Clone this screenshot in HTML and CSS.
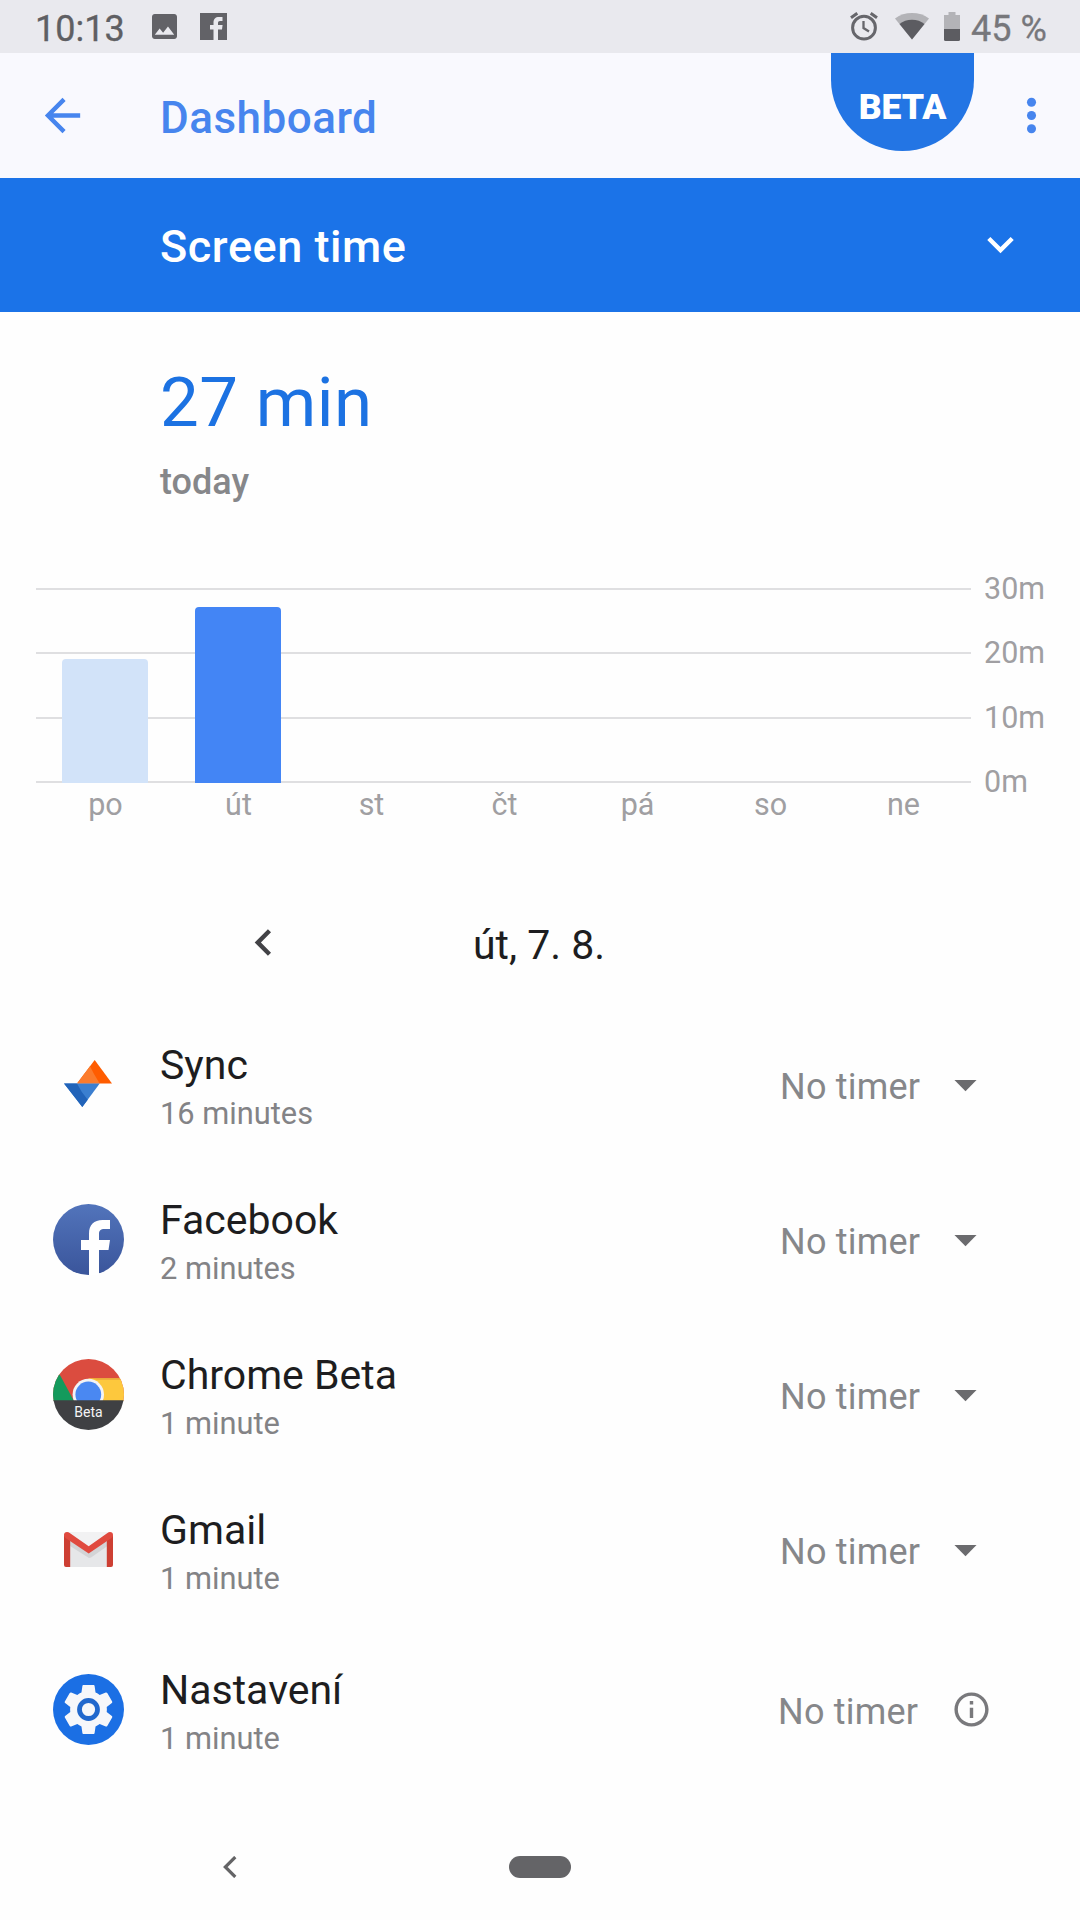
FILE: index.html
```html
<!DOCTYPE html>
<html lang="en">
<head>
<meta charset="utf-8">
<title>Dashboard</title>
<link rel="stylesheet" href="styles.css">
</head>
<body>
<div class="statusbar">
  <span class="clock">10:13</span>
  <svg class="st-photo" width="25" height="25" viewBox="3 3 18 18"><path fill="#626267" d="M21 19V5c0-1.1-.9-2-2-2H5c-1.1 0-2 .9-2 2v14c0 1.100.9 2 2 2h14c1.100 0 2-.9 2-2zM8.500 13.500l2.500 3.010L14.500 12l4.500 6H5l3.500-4.500z"/></svg>
  <svg class="st-fb" width="27" height="27" viewBox="0 0 27 27"><path fill="#626267" d="M0 0h27v27H18v-10.500h4l.6-4.500H18V10c0-1.300.6-2 2-2h2.500V4H19c-3.600 0-5.500 2-5.500 5.500V12h-3.500v4.500h3.500V27H0z"/></svg>
  <span class="spacer"></span>
  <svg class="st-alarm" width="28" height="29" viewBox="0 0 28 29"><g fill="none" stroke="#66666b"><circle cx="14" cy="15.700" r="11.400" stroke-width="3"/><path stroke-width="2.300" d="M13.500 9v7l5.500 3.400"/><path stroke-width="3" d="M1 5.800L7.300 1.200M27 5.800L20.700 1.200"/></g></svg>
  <svg class="st-wifi" width="34" height="27" viewBox="0 0 34 27"><path fill="#b3b3b7" d="M0 5.500C5 1.800 10.600 0 17 0s12 1.800 17 5.500L17 26.500z"/><path fill="#5c5c61" d="M4.500 11C8 8.300 12 6.800 17 6.800S26 8.300 29.500 11L17 26.500z"/></svg>
  <svg class="st-batt" width="16" height="29" viewBox="0 0 16 29"><path fill="#b3b3b7" d="M4.500 0h7v3H16v14H0V3h4.500z"/><path fill="#5c5c61" d="M0 17h16v10.500q0 1.500-1.500 1.500h-13Q0 29 0 27.500z"/></svg>
  <span class="percent">45 %</span>
</div>

<header class="appbar">
  <svg class="icon back" viewBox="0 0 24 24"><path fill="#4785ee" d="M20 11H7.830l5.590-5.590L12 4l-8 8 8 8 1.410-1.410L7.830 13H20v-2z"/></svg>
  <h1 class="title">Dashboard</h1>
  <div class="beta">BETA</div>
  <svg class="icon more" viewBox="0 0 24 24"><g fill="#4785ee"><circle cx="12" cy="6" r="2.050"/><circle cx="12" cy="12" r="2.050"/><circle cx="12" cy="18" r="2.050"/></g></svg>
</header>

<div class="selector">
  <span class="selector-label">Screen time</span>
  <svg class="icon" viewBox="0 0 24 24"><path fill="#fff" d="M7.410 8.590L12 13.170l4.590-4.580L18 10l-6 6-6-6z"/></svg>
</div>

<section class="summary">
  <div class="total">27 min</div>
  <div class="when">today</div>
</section>

<section class="chart">
  <div class="plot">
    <div class="lines"><i></i><i></i><i></i><i></i></div>
    <div class="bars">
      <i class="bar past" style="height:124px"></i>
      <i class="bar" style="height:176px"></i>
    </div>
  </div>
  <div class="scale"><span>30m</span><span>20m</span><span>10m</span><span>0m</span></div>
  <div class="days"><span>po</span><span>út</span><span>st</span><span>čt</span><span>pá</span><span>so</span><span>ne</span></div>
</section>

<div class="datenav">
  <svg class="icon" viewBox="0 0 24 24"><path fill="#424246" d="M15.410 7.410L14 6l-6 6 6 6 1.410-1.410L10.830 12z"/></svg>
  <span class="date">út, 7. 8.</span>
</div>

<main class="apps">
  <div class="app">
    <svg class="logo" viewBox="0 0 71 71">
      <path fill="#ff5c00" d="M41.700 11L59 34.500H24z"/><path fill="#fb7b2c" d="M37 17.200L24 34.500h22.700L41 25z"/>
      <path fill="#3b7fd0" d="M11 34.500h35.700L29.300 58z"/><path fill="#2163b9" d="M11 34.500h13l4.500 8 6.200 8.200L29.300 58z"/>
    </svg>
    <div class="info"><div class="name">Sync</div><div class="used">16 minutes</div></div>
    <span class="timer">No timer</span>
    <svg class="icon drop" viewBox="0 0 24 24"><path fill="#6b6b6e" d="M7 10l5 5 5-5z"/></svg>
  </div>
  <div class="app">
    <svg class="logo" viewBox="0 0 71 71">
      <defs><linearGradient id="fb" x2="0" y2="1"><stop stop-color="#5274bb"/><stop offset="1" stop-color="#3a559b"/></linearGradient><clipPath id="disc"><circle cx="35.500" cy="35.500" r="35.500"/></clipPath></defs>
      <circle cx="35.500" cy="35.500" r="35.500" fill="url(#fb)"/>
      <path fill="#fff" d="M36 71V46h-8V36h8v-6.500C36 21 41 16 49.500 16H57v9h-5.500C47.500 25 46 26.500 46 30v6h11l-1.500 10H46v25z"/>
    </svg>
    <div class="info"><div class="name">Facebook</div><div class="used">2 minutes</div></div>
    <span class="timer">No timer</span>
    <svg class="icon drop" viewBox="0 0 24 24"><path fill="#6b6b6e" d="M7 10l5 5 5-5z"/></svg>
  </div>
  <div class="app">
    <svg class="logo" viewBox="0 0 71 71">
      <g clip-path="url(#disc)">
        <path fill="#db4c3f" d="M0 0h71v42H0z"/>
        <path fill="#149a5c" d="M0 8L7.500 17 21 42H0z"/>
        <path fill="#fdc83d" d="M35.500 19.300H71V42H42z"/>
        <path fill="#e9a93a" d="M38 19.300H70v1.500H44z"/>
        <circle cx="35.300" cy="35.500" r="15.700" fill="#f3f3f5"/>
        <circle cx="35.300" cy="35.500" r="12.900" fill="#4a88f2"/>
        <path fill="#3f4043" d="M0 41.300h71V71H0z"/>
      </g>
      <text class="beta-tag" x="35.500" y="58.300" text-anchor="middle">Beta</text>
    </svg>
    <div class="info"><div class="name">Chrome Beta</div><div class="used">1 minute</div></div>
    <span class="timer">No timer</span>
    <svg class="icon drop" viewBox="0 0 24 24"><path fill="#6b6b6e" d="M7 10l5 5 5-5z"/></svg>
  </div>
  <div class="app">
    <svg class="logo" viewBox="0 0 71 71">
      <path fill="#e6e7e9" d="M14 18h43v35H14z"/>
      <path fill="#f2f2f3" d="M15 18h41L35.500 33z"/>
      <path fill="#d3d4d6" d="M17 26l19 13 18.500-13v6L38 43.500 36 44 17 32z"/>
      <path fill="#cd3f33" d="M11 21l6.200 4v28H13q-2 0-2-2zM60 21l-6.200 4v28H58q2 0 2-2z"/>
      <path fill="#e04a3f" d="M11 21q0-3 3-3 1.500 0 2.700 1L35.700 32.300 54.500 19Q55.700 18 57 18q3 0 3 3 0 1.800-1.500 3L35.700 39.500 12.500 24Q11 22.800 11 21z"/>
    </svg>
    <div class="info"><div class="name">Gmail</div><div class="used">1 minute</div></div>
    <span class="timer">No timer</span>
    <svg class="icon drop" viewBox="0 0 24 24"><path fill="#6b6b6e" d="M7 10l5 5 5-5z"/></svg>
  </div>
  <div class="app app-system">
    <svg class="logo" viewBox="0 0 71 71">
      <circle cx="35.500" cy="35.500" r="35.500" fill="#1b6fe4"/>
      <path fill="#f6f7fa" transform="translate(6.100 6.100) scale(2.450)" d="M19.430 12.980c.04-.32.07-.64.07-.98s-.03-.66-.07-.98l2.110-1.650c.19-.15.24-.42.12-.64l-2-3.460c-.12-.22-.39-.3-.61-.22l-2.490 1c-.52-.4-1.080-.73-1.690-.98l-.38-2.650C14.460 2.180 14.250 2 14 2h-4c-.25 0-.46.18-.49.42l-.38 2.650c-.61.25-1.170.59-1.690.98l-2.490-1c-.23-.09-.49 0-.61.22l-2 3.460c-.13.22-.07.49.12.64l2.110 1.650c-.04.32-.07.65-.07.98s.03.66.07.98l-2.110 1.650c-.19.15-.24.42-.12.64l2 3.460c.12.22.39.3.61.22l2.490-1c.52.4 1.080.73 1.690.98l.38 2.650c.03.24.24.42.49.42h4c.25 0 .46-.18.49-.42l.38-2.650c.61-.25 1.170-.59 1.690-.98l2.490 1c.23.09.49 0 .61-.22l2-3.460c.12-.22.07-.49-.12-.64l-2.110-1.650z"/>
      <circle cx="35.500" cy="35.500" r="9" fill="none" stroke="#2168cd" stroke-width="4.800"/>
    </svg>
    <div class="info"><div class="name">Nastavení</div><div class="used">1 minute</div></div>
    <span class="timer">No timer</span>
    <svg class="hint" viewBox="0 0 24 24"><path fill="#79797c" d="M11 17h2v-6h-2v6zm1-15C6.480 2 2 6.480 2 12s4.480 10 10 10 10-4.480 10-10S17.520 2 12 2zm0 18c-4.410 0-8-3.590-8-8s3.590-8 8-8 8 3.590 8 8-3.590 8-8 8zM11 9h2V7h-2v2z"/></svg>
  </div>
</main>

<nav class="navbar">
  <svg width="14" height="22" viewBox="0 0 14 22"><path fill="none" stroke="#646466" stroke-width="3.200" d="M12.300 1L2.300 11l10 10"/></svg>
  <span class="home"></span>
</nav>
</body>
</html>
```
FILE: styles.css
```css
* { box-sizing: border-box; }
body {
  margin: 0;
  width: 1080px;
  height: 1920px;
  display: flex;
  flex-direction: column;
  overflow: hidden;
  background: #fefefe;
  font-family: Roboto, "Noto Sans", sans-serif;
  color: #1d1d20;
}
svg { display: block; flex: none; }
i { display: block; }
.icon { width: 53px; height: 53px; }

.statusbar {
  height: 53px;
  flex: none;
  display: flex;
  align-items: flex-start;
  padding: 0 34px 0 35px;
  background: #e9e9ee;
  font-size: 36px;
  line-height: 58px;
  white-space: nowrap;
}
.clock { width: 117px; color: #5f5f63; -webkit-text-stroke: .3px #5f5f63; }
.percent { width: 75px; color: #77777b; -webkit-text-stroke: .3px #77777b; }
.spacer { flex: 1; }
.st-photo { margin-top: 14px; }
.st-fb { margin: 13px 0 0 23px; }
.st-alarm { margin: 12px 17px 0 0; }
.st-wifi { margin: 13px 15px 0 0; }
.st-batt { margin: 12px 11px 0 0; }

.appbar {
  height: 125px;
  flex: none;
  display: flex;
  align-items: center;
  padding: 0 22px 0 36px;
  background: #f9f9fe;
}
.title {
  margin: 4px 0 0 71px;
  width: 671px;
  font-size: 44px;
  line-height: 60px;
  font-weight: 500;
  letter-spacing: .5px;
  color: #4785ee;
}
.beta {
  align-self: flex-start;
  width: 143px;
  height: 98px;
  border-radius: 0 0 72px 72px;
  background: #2375e4;
  color: #fff;
  font-size: 35.5px;
  font-weight: 900;
  line-height: 108px;
  text-align: center;
}
.more { margin-left: auto; }

.selector {
  height: 134px;
  flex: none;
  display: flex;
  align-items: center;
  justify-content: space-between;
  padding: 0 53px 2px 160px;
  background: #1b73e8;
}
.selector-label {
  padding-top: 6px;
  font-size: 45px;
  line-height: 60px;
  font-weight: 500;
  letter-spacing: .55px;
  color: #fff;
}

.summary { height: 276px; flex: none; padding: 51px 0 0 160px; }
.total { font-size: 69px; line-height: 80px; letter-spacing: .4px; color: #1c72e2; }
.when { margin-top: 14px; font-size: 36px; line-height: 50px; font-weight: 500; color: #86878a; }

.chart {
  height: 270px;
  flex: none;
  display: grid;
  grid-template-columns: 935px 1fr;
  grid-template-rows: 195px 1fr;
  column-gap: 13px;
  padding-left: 36px;
  font-size: 30.5px;
  color: #a09fa2;
}
.plot { display: grid; }
.lines, .bars { grid-area: 1 / 1; }
.lines { display: flex; flex-direction: column; justify-content: space-between; }
.lines i { height: 2px; background: #dfdfe1; }
.bars {
  display: grid;
  grid-template-columns: repeat(7, 133px);
  padding: 0 2px;
  align-items: end;
  justify-items: center;
}
.bar { width: 86px; border-radius: 4px 4px 0 0; background: #4385f5; }
.bar.past { background: #d2e3f9; }
.scale {
  display: flex;
  flex-direction: column;
  justify-content: space-between;
  margin: -19px 0;
  line-height: 40px;
}
.days {
  display: grid;
  grid-template-columns: repeat(7, 133px);
  padding: 0 1px 0 3px;
  text-align: center;
  line-height: 43px;
}

.datenav {
  height: 169px;
  margin-bottom: -20px;
  flex: none;
  display: grid;
  grid-template-columns: 53px 1fr 292px;
  align-items: center;
  padding-left: 237px;
}
.date { text-align: center; padding-top: 5px; font-size: 41px; line-height: 50px; }

.apps { flex: none; display: flex; flex-direction: column; }
.app {
  height: 155px;
  display: grid;
  grid-template-columns: 71px 656px 158.5px auto;
  align-items: center;
  justify-content: start;
  padding-left: 53px;
}
.app-system { margin-top: 5px; grid-template-columns: 71px 654px 172.5px auto; }
.logo { width: 71px; height: 71px; }
.info { padding: 11px 0 0 36px; line-height: 48px; white-space: nowrap; }
.name { font-size: 41px; }
.used { font-size: 30.8px; line-height: 50px; color: #838386; }
.timer { padding-top: 5px; font-size: 36px; line-height: 50px; letter-spacing: .2px; color: #86878a; white-space: nowrap; }
.hint { width: 41px; height: 41px; }
.beta-tag { font: 14px Roboto, sans-serif; fill: #f4f4f5; }

.navbar {
  margin-top: auto;
  height: 106px;
  flex: none;
  display: grid;
  grid-template-columns: 286px 62px;
  align-items: center;
  padding-left: 223px;
}
.home { height: 22px; border-radius: 11px; background: #646467; }
```
